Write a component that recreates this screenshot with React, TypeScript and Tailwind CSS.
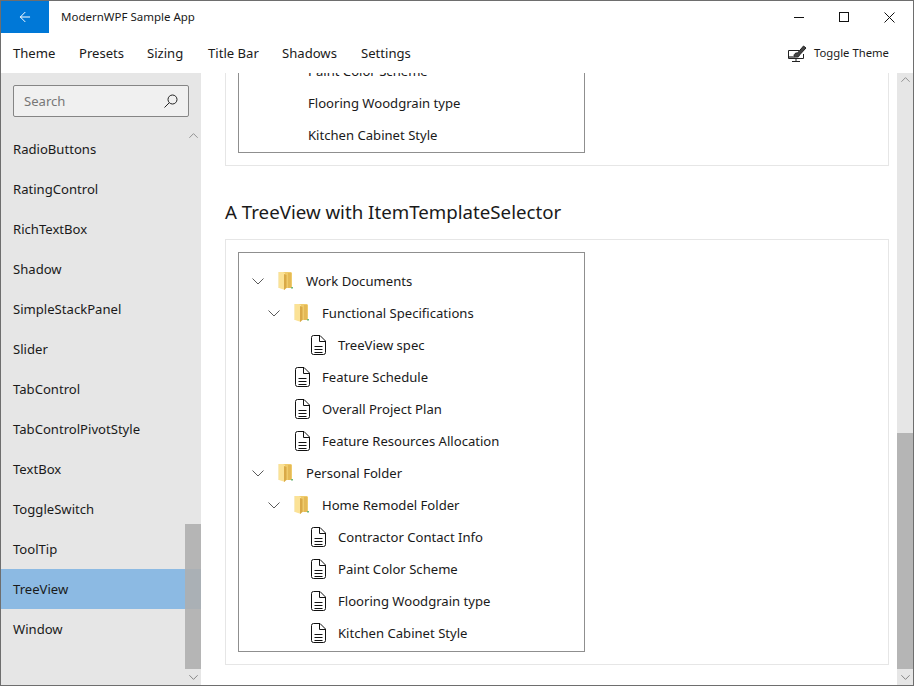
import { ArrowLeft } from "lucide-react";

const navItems = [
  "RadioButtons",
  "RatingControl",
  "RichTextBox",
  "Shadow",
  "SimpleStackPanel",
  "Slider",
  "TabControl",
  "TabControlPivotStyle",
  "TextBox",
  "ToggleSwitch",
  "ToolTip",
  "TreeView",
  "Window",
];

const menuItems = [
  { label: "Theme", cls: "w-[78px] pl-3" },
  { label: "Presets", cls: "w-[68px]" },
  { label: "Sizing", cls: "w-[61px]" },
  { label: "Title Bar", cls: "w-[74px]" },
  { label: "Shadows", cls: "w-[79px]" },
  { label: "Settings", cls: "w-[60px]" },
];

type Row = { label: string; level: number; kind: "folder" | "file" };

const treeRows: Row[] = [
  { label: "Work Documents", level: 0, kind: "folder" },
  { label: "Functional Specifications", level: 1, kind: "folder" },
  { label: "TreeView spec", level: 2, kind: "file" },
  { label: "Feature Schedule", level: 1, kind: "file" },
  { label: "Overall Project Plan", level: 1, kind: "file" },
  { label: "Feature Resources Allocation", level: 1, kind: "file" },
  { label: "Personal Folder", level: 0, kind: "folder" },
  { label: "Home Remodel Folder", level: 1, kind: "folder" },
  { label: "Contractor Contact Info", level: 2, kind: "file" },
  { label: "Paint Color Scheme", level: 2, kind: "file" },
  { label: "Flooring Woodgrain type", level: 2, kind: "file" },
  { label: "Kitchen Cabinet Style", level: 2, kind: "file" },
];

function Chevron({ up, className }: { up?: boolean; className?: string }) {
  return (
    <svg width="12" height="7" viewBox="0 0 12 7" fill="none" className={className}>
      <path d={up ? "M.5 6.500 6 1l5.500 5.500" : "M.5.5 6 6 11.500.5"} stroke="currentColor" strokeWidth="1" />
    </svg>
  );
}

function FolderIcon() {
  return (
    <svg width="16" height="20" viewBox="0 0 16 20" className="shrink-0">
      <path d="M5 1h8l1 1v15H5z" fill="#efcb6c" />
      <path d="M0 1h5l2 1v17l-3-1-3-1z" fill="#fbe296" />
      <path d="M6 3l2.500 1v13L6 19z" fill="#d9a947" />
      <path d="M10 2h3v15h-3z" fill="#e4b956" />
      <path d="M0 1h1v16H0z" fill="#f8ebc0" />
      <path d="M13 16h2v1.500h-2z" fill="#6fb87a" />
    </svg>
  );
}

function FileIcon() {
  return (
    <svg width="15" height="20" viewBox="0 0 15 20" fill="none" className="shrink-0" stroke="#111">
      <path d="M.5 2.500a2 2 0 0 1 2-2h6.500l5.500 5.500v11.500a2 2 0 0 1-2 2h-10a2 2 0 0 1-2-2z" />
      <path d="M8.500.5v6h6M3.500 11.500h8M3.500 14.500h8M3.500 17.500h8" />
    </svg>
  );
}

function TreeRow({ row }: { row: Row }) {
  const pad = row.level === 0 ? "pl-[13px]" : row.level === 1 ? "pl-[29px]" : "pl-[45px]";
  return (
    <div className={`flex h-8 items-center ${pad}`}>
      {row.kind === "folder" ? (
        <>
          <Chevron className="text-[#5a5a5a]" />
          <span className="ml-[14px] mr-[12px] flex"><FolderIcon /></span>
        </>
      ) : (
        <span className="ml-[27px] mr-[12px] flex"><FileIcon /></span>
      )}
      <span className="whitespace-nowrap pt-[2px]">{row.label}</span>
    </div>
  );
}

export default function App() {
  return (
    <div className="flex h-[686px] w-[914px] flex-col overflow-hidden border border-[#6e6e6e] bg-white font-['Noto_Sans','Open_Sans',sans-serif] text-[13.1px] text-[#1a1a1a]">
      <header className="flex h-[32px] shrink-0 items-center">
        <div className="flex h-full w-[48px] items-center justify-center bg-[#0078d7] text-white">
          <ArrowLeft size={16} strokeWidth={1.5} />
        </div>
        <span className="ml-3 text-[11.5px]">ModernWPF Sample App</span>
        <div className="ml-auto flex h-full items-center">
          <span className="flex w-[44px] justify-center">
            <span className="h-px w-[10px] bg-[#111]" />
          </span>
          <span className="mr-px flex w-[45px] justify-center">
            <span className="h-[10px] w-[10px] border border-[#111]" />
          </span>
          <span className="mr-px flex w-[45px] justify-center">
            <svg width="11" height="11" viewBox="0 0 11 11" stroke="#111" strokeWidth="1">
              <path d="M.5.5l10 10M10.500.5l-10 10" />
            </svg>
          </span>
        </div>
      </header>

      <nav className="flex h-[40px] shrink-0 items-center">
        {menuItems.map((m) => (
          <span key={m.label} className={`whitespace-nowrap pt-[2px] ${m.cls}`}>{m.label}</span>
        ))}
        <div className="ml-auto flex items-center pr-[24px] text-[11.3px]">
          <svg width="19" height="17" viewBox="0 0 19 17" fill="none" stroke="#222" className="mr-[7px]">
            <path d="M11 5.500H.5v8h15V9" />
            <path d="M1 11h5l2 2H1z" fill="#777" stroke="none" />
            <path d="M8 13.500v2.500M4 16.500h8" />
            <path d="M6 11c0-2 1.500-3.500 3.500-3l6-7 2.500 2-6.500 7c0 2-3 3-5.500 1z" fill="#444" stroke="#222" />
          </svg>
          <span>Toggle Theme</span>
        </div>
      </nav>

      <div className="flex min-h-0 flex-1">
        <aside className="flex w-[200px] shrink-0 flex-col bg-[#e6e6e6]">
          <div className="px-3 pt-3">
            <div className="flex h-[32px] items-center justify-between rounded-[2px] border border-[#858585] bg-[#f0f0f0] pl-[10px] pr-[10px] text-[#777]">
              <span className="pt-[2px]">Search</span>
              <svg width="14" height="14" viewBox="0 0 14 14" fill="none" stroke="#222">
                <circle cx="8.500" cy="5.500" r="4.500" />
                <path d="M5.200 8.800.5 13.500" />
              </svg>
            </div>
          </div>
          <div className="relative mt-[12px] min-h-0 flex-1">
            <div>
              {navItems.map((item) => (
                <div
                  key={item}
                  className={`flex h-[40px] items-center pl-3 pt-[2px] ${item === "TreeView" ? "bg-[#8cbae3]" : ""}`}
                >
                  {item}
                </div>
              ))}
            </div>
            <div className="absolute inset-y-0 right-0 flex w-4 flex-col items-center">
              <Chevron up className="mt-[3px] w-[9px] text-[#777]" />
              <div className="mt-auto h-[145px] w-4 bg-[#aeaeae]/[0.88]" />
              <div className="flex h-4 items-center">
                <Chevron className="w-[9px] text-[#666]" />
              </div>
            </div>
          </div>
        </aside>

        <main className="flex min-w-0 flex-1">
          <div className="min-w-0 flex-1 overflow-hidden">
            <div className="-mt-[32px] pl-6 pr-2">
              <section className="h-[125px] border border-[#e6e6e6] px-3">
                <div className="flex h-[111px] w-[347px] flex-col justify-end border border-t-0 border-[#8f8f8f] pb-px pl-[69px]">
                  {["Paint Color Scheme", "Flooring Woodgrain type", "Kitchen Cabinet Style"].map((t) => (
                    <div key={t} className="flex h-8 shrink-0 items-center whitespace-nowrap pt-[2px]">{t}</div>
                  ))}
                </div>
              </section>
              <h2 className="mb-[13px] mt-[31px] text-[18.7px] leading-[29px]">A TreeView with ItemTemplateSelector</h2>
              <section className="h-[426px] border border-[#e6e6e6] p-3">
                <div className="h-[400px] w-[347px] border border-[#8f8f8f] pt-3">
                  {treeRows.map((row) => (
                    <TreeRow key={row.label} row={row} />
                  ))}
                </div>
              </section>
            </div>
          </div>
          <div className="flex w-4 shrink-0 flex-col items-center bg-[#e6e6e6]">
            <Chevron up className="mt-[3px] w-[9px] text-[#777]" />
            <div className="mt-auto h-[236px] w-4 bg-[#b5b5b5]" />
            <div className="flex h-4 items-center">
              <Chevron className="w-[9px] text-[#666]" />
            </div>
          </div>
        </main>
      </div>
    </div>
  );
}
